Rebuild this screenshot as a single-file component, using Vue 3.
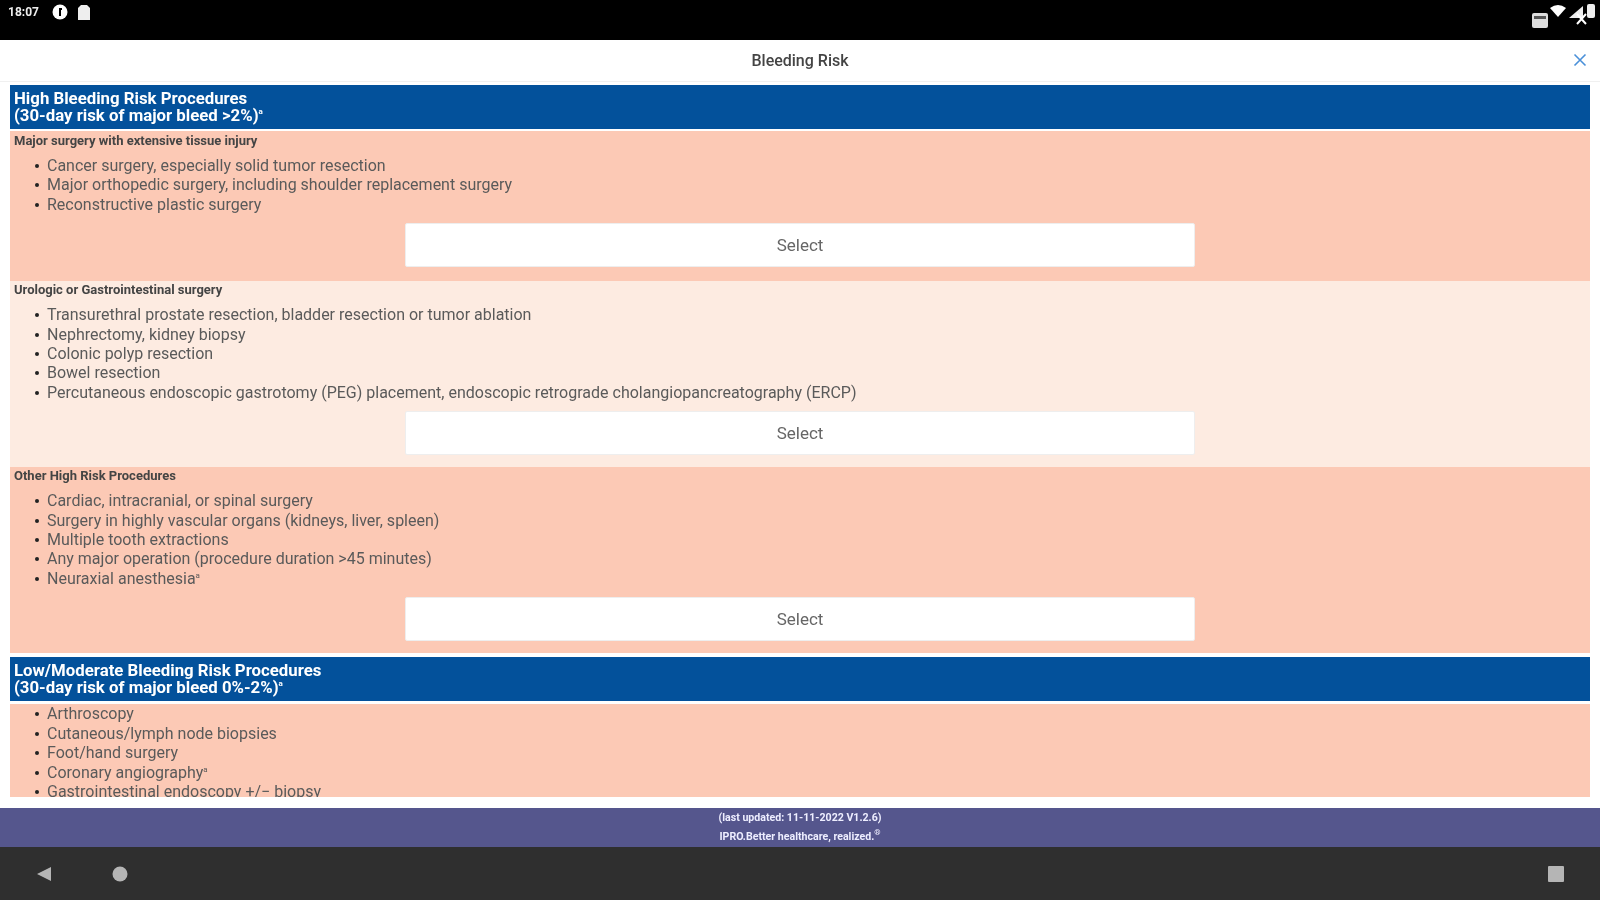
<script setup>
const sections = [
  { type: 'head', l1: 'High Bleeding Risk Procedures', l2: '(30-day risk of major bleed >2%)', sup: 'a' },
  { type: 'group', tone: 'dark first', title: 'Major surgery with extensive tissue injury', items: [
    ['Cancer surgery, especially solid tumor resection'],
    ['Major orthopedic surgery, including shoulder replacement surgery'],
    ['Reconstructive plastic surgery'] ] },
  { type: 'group', tone: 'light', title: 'Urologic or Gastrointestinal surgery', items: [
    ['Transurethral prostate resection, bladder resection or tumor ablation'],
    ['Nephrectomy, kidney biopsy'],
    ['Colonic polyp resection'],
    ['Bowel resection'],
    ['Percutaneous endoscopic gastrotomy (PEG) placement, endoscopic retrograde cholangiopancreatography (ERCP)'] ] },
  { type: 'group', tone: 'dark', title: 'Other High Risk Procedures', items: [
    ['Cardiac, intracranial, or spinal surgery'],
    ['Surgery in highly vascular organs (kidneys, liver, spleen)'],
    ['Multiple tooth extractions'],
    ['Any major operation (procedure duration >45 minutes)'],
    ['Neuraxial anesthesia', 'a'] ] },
  { type: 'head', l1: 'Low/Moderate Bleeding Risk Procedures', l2: '(30-day risk of major bleed 0%-2%)', sup: 'a' }
]
const low = [
  ['Arthroscopy'],
  ['Cutaneous/lymph node biopsies'],
  ['Foot/hand surgery'],
  ['Coronary angiography', 'a'],
  ['Gastrointestinal endoscopy +/− biopsy']
]
</script>

<template>
  <div class="screen">
    <header class="status">
      <div class="status-left">
        <span class="time">18:07</span>
        <svg width="16" height="16" viewBox="0 0 16 16"><circle cx="8" cy="8" r="7.500" fill="#fff"/><path d="M7 4h3v2H9v6H7z" fill="#000"/></svg>
        <svg width="12" height="15" viewBox="0 0 12 15"><path d="M3 0h6l3 3v12H0V3z" fill="#eee"/></svg>
      </div>
      <div class="status-right">
        <svg class="sim" width="16" height="15" viewBox="0 0 16 15"><rect x="0" y="0" width="16" height="15" rx="2" fill="#ddd"/><rect x="2" y="3" width="12" height="3" fill="#555"/></svg>
        <svg class="wifi" width="16" height="12" viewBox="0 0 16 12"><path d="M0 3Q8-3 16 3L8 12z" fill="#fff"/></svg>
        <svg class="sig" width="27" height="21" viewBox="0 0 27 21"><path d="M1 14 15 2v12z" fill="#eee"/><rect x="19" y="0" width="8" height="14" rx="2" fill="#eee"/><path d="M9 10l9 10M18 10l-9 10" stroke="#fff" stroke-width="2"/></svg>
      </div>
    </header>

    <div class="titlebar">
      <span class="title">Bleeding Risk</span>
      <svg class="close" width="14" height="14" viewBox="0 0 14 14"><path d="M1.500 1.500l11 11M12.500 1.500l-11 11" stroke="#4a90d9" stroke-width="1.600"/></svg>
    </div>

    <main class="content">
      <template v-for="(s, i) in sections" :key="i">
        <div v-if="s.type === 'head'" class="head">
          <div>{{ s.l1 }}</div>
          <div>{{ s.l2 }}<sup>{{ s.sup }}</sup></div>
        </div>
        <section v-else class="group" :class="s.tone">
          <h3>{{ s.title }}</h3>
          <ul>
            <li v-for="(it, j) in s.items" :key="j">{{ it[0] }}<sup v-if="it[1]">{{ it[1] }}</sup></li>
          </ul>
          <button class="select">Select</button>
        </section>
      </template>
      <section class="group dark low">
        <ul>
          <li v-for="(it, j) in low" :key="j">{{ it[0] }}<sup v-if="it[1]">{{ it[1] }}</sup></li>
        </ul>
      </section>
    </main>

    <footer class="foot">
      <div>(last updated: 11-11-2022 V1.2.6)</div>
      <div>IPRO.Better healthcare, realized.<sup>®</sup></div>
    </footer>

    <nav class="navbar">
      <div class="nav-left">
        <svg width="16" height="16" viewBox="0 0 16 16"><path d="M15 1v14L1 8z" fill="#b5b5b5"/></svg>
        <svg width="16" height="16" viewBox="0 0 16 16"><circle cx="8" cy="8" r="7.500" fill="#b5b5b5"/></svg>
      </div>
      <svg width="16" height="16" viewBox="0 0 16 16"><rect width="16" height="16" rx="1" fill="#b5b5b5"/></svg>
    </nav>
  </div>
</template>

<style>
html, body { margin: 0; background: #fff; }
</style>

<style scoped>
.screen {
  width: 1600px;
  height: 900px;
  display: flex;
  flex-direction: column;
  overflow: hidden;
  font-family: Roboto, "Liberation Sans", sans-serif;
  background: #fff;
  filter: blur(0.6px);
}
.status {
  height: 40px;
  flex: none;
  background: #000;
  color: #eee;
  display: flex;
  justify-content: space-between;
  box-sizing: border-box;
  padding: 4px 0 0 8px;
}
.status-left { display: flex; align-items: center; gap: 10px; height: 16px; }
.time { font-size: 12px; font-weight: 700; width: 34px; }
.status-right { display: flex; align-items: flex-start; padding-right: 5px; }
.sim { margin-top: 9px; }
.wifi { margin: 1px 0 0 2px; }
.sig { margin: 0 0 0 2px; }
.titlebar {
  height: 42px;
  flex: none;
  display: flex;
  align-items: center;
  justify-content: center;
  position: relative;
  border-bottom: 1px solid #f0f0f0;
  box-sizing: border-box;
}
.title { font-size: 16px; font-weight: 500; color: #444; }
.close { position: absolute; right: 13px; top: 13px; }
.content {
  flex: 1;
  min-height: 0;
  overflow: hidden;
  padding: 3px 10px 0;
}
.head {
  background: #03519b;
  color: #fff;
  font-size: 16.800px;
  line-height: 17px;
  font-weight: 700;
  height: 44px;
  box-sizing: border-box;
  padding: 5px 4px;
  margin-bottom: 2px;
}
.group + .head { margin-top: 4px; }
.group { color: #5a5a5a; font-size: 16px; padding: 1px 4px 0; overflow: hidden; }
.group.dark { background: #fcc9b5; }
.group.light { background: #fdebe1; }
.group.first { padding-top: 2px; padding-bottom: 2px; }
.group h3 {
  margin: 0;
  font-size: 13px;
  line-height: 16px;
  font-weight: 700;
  color: #444;
}
.group ul { margin: 7px 0 0; padding: 0 0 0 33px; list-style: none; }
.group li { line-height: 19.400px; position: relative; }
.group li::before {
  content: "";
  position: absolute;
  left: -12px;
  top: 8px;
  width: 4px;
  height: 4px;
  border-radius: 50%;
  background: #222;
}
sup { font-size: 8px; line-height: 0; }
.select {
  display: block;
  width: 790px;
  height: 44px;
  margin: 9px auto 12px;
  border: 1px solid #eee;
  border-radius: 2px;
  background: #fff;
  color: #666;
  font: inherit;
  font-size: 17px;
}
.group.low { height: 93px; margin-top: 3px; padding-top: 0; box-sizing: border-box; }
.group.low ul { margin-top: 0; }
.foot {
  height: 39px;
  flex: none;
  background: #55568d;
  color: #eef;
  font-size: 10.600px;
  font-weight: 700;
  line-height: 19px;
  text-align: center;
  box-sizing: border-box;
}
.navbar {
  height: 53px;
  flex: none;
  background: #2f2f2f;
  display: flex;
  align-items: center;
  justify-content: space-between;
  padding: 0 36px;
}
.nav-left { display: flex; gap: 60px; }
</style>
